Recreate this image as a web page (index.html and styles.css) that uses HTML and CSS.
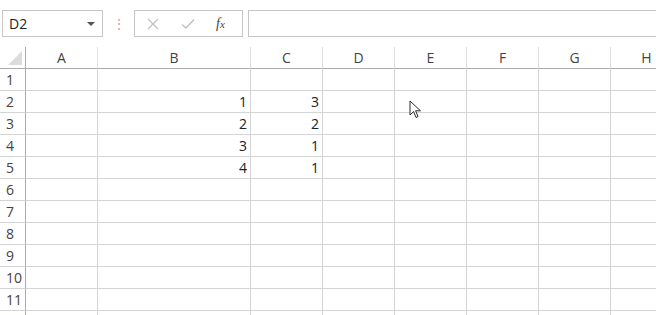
FILE: index.html
```html
<!DOCTYPE html>
<html lang="en">
<head>
    <meta charset="UTF-8">
    <title>Sheet</title>
    <link rel="stylesheet" href="styles.css">
</head>
<body>

<div class="toolbar">
    <div class="name-box">
        <span>D2</span>
        <span class="drop"></span>
    </div>
    <div class="grip">&#8942;</div>
    <div class="fx-buttons">
        <svg class="btn-x" width="12" height="12" viewBox="0 0 12 12">
            <path d="M1 1 L11 11 M11 1 L1 11" stroke="#c2c2c2" stroke-width="1.3" fill="none"/>
        </svg>
        <svg class="btn-ok" width="14" height="12" viewBox="0 0 14 12">
            <path d="M1 6.5 L5 10 L13 1.5" stroke="#c2c2c2" stroke-width="1.6" fill="none"/>
        </svg>
        <span class="fx"><i>f</i><i class="x">x</i></span>
    </div>
    <div class="formula"></div>
</div>

<div class="sheet">
    <div class="row head">
        <div class="cell corner"><span class="tri"></span></div>
        <div class="cell col-a">A</div>
        <div class="cell col-b">B</div>
        <div class="cell">C</div>
        <div class="cell">D</div>
        <div class="cell">E</div>
        <div class="cell">F</div>
        <div class="cell">G</div>
        <div class="cell">H</div>
    </div>
    <div id="rows"></div>
    <svg class="pointer" width="14" height="20" viewBox="0 0 14 20">
        <path d="M1 1 L1 15 L4.5 11.5 L7 17.5 L9 16.5 L6.6 10.8 L11.5 10.8 Z" fill="#fff" stroke="#2a2a2a" stroke-width="1" stroke-linejoin="round"/>
    </svg>
</div>

<script>
    const data = { 2: [1, 3], 3: [2, 2], 4: [3, 1], 5: [4, 1] };
    const rows = document.getElementById('rows');

    // row 12 only peeks in at the bottom edge, so it gets no number
    for (let r = 1; r <= 12; r++) {
        const vals = data[r] || ['', ''];
        let html = '<div class="cell num">' + (r < 12 ? r : '') + '</div>';
        html += '<div class="cell col-a"></div>';
        html += '<div class="cell col-b val">' + vals[0] + '</div>';
        html += '<div class="cell val">' + vals[1] + '</div>';
        for (let c = 0; c < 5; c++) html += '<div class="cell"></div>';
        const row = document.createElement('div');
        row.className = 'row';
        row.innerHTML = html;
        rows.appendChild(row);
    }
</script>

</body>
</html>
```

FILE: styles.css
```css
html, body {
    margin: 0;
    padding: 0;
    width: 100%;
    height: 100%;
    background-color: white;
    font-family: "Open Sans", "Noto Sans", sans-serif;
    color: #333;
    overflow: hidden;
}
.toolbar {
    display: flex;
    align-items: center;
    height: 47px;
    padding-left: 2px;
    box-sizing: border-box;
}
.name-box {
    width: 101px;
    height: 27px;
    border: 1px solid #c6c6c6;
    box-sizing: border-box;
    display: flex;
    align-items: center;
    justify-content: space-between;
    padding: 0 7px 0 6px;
    font-size: 14px;
    color: #222;
}
.drop {
    width: 0;
    height: 0;
    border-left: 4px solid transparent;
    border-right: 4px solid transparent;
    border-top: 4px solid #555;
}
.grip {
    width: 31px;
    text-align: center;
    color: #b0b0b0;
    font-size: 14px;
}
.fx-buttons {
    width: 109px;
    height: 27px;
    border: 1px solid #c6c6c6;
    box-sizing: border-box;
    display: flex;
    align-items: center;
    padding-left: 12px;
}
.btn-x {
    margin-right: 22px;
}
.btn-ok {
    margin-right: 21px;
}
.fx {
    font-family: "Liberation Serif", serif;
    font-size: 14px;
    color: #444;
}
.fx .x {
    font-size: 11px;
}
.formula {
    flex: 1;
    height: 27px;
    margin-left: 5px;
    border: 1px solid #c6c6c6;
    border-right: none;
    box-sizing: border-box;
}
.sheet {
    position: relative;
}
.row {
    display: flex;
    height: 22px;
}
.cell {
    flex: none;
    width: 72px;
    height: 22px;
    box-sizing: border-box;
    border-right: 1px solid #d4d4d4;
    border-bottom: 1px solid #d4d4d4;
    font-size: 14px;
    line-height: 21px;
    color: #222;
}
.cell.col-a {
    width: 72px;
}
.cell.col-b {
    width: 153px;
}
.head .cell {
    text-align: center;
    color: #444;
    border-right-color: #e0e0e0;
    border-bottom-color: #ababab;
}
.head .cell.corner {
    position: relative;
    width: 26px;
    border-right-color: #ababab;
}
.tri {
    position: absolute;
    right: 3px;
    bottom: 3px;
    width: 0;
    height: 0;
    border-left: 14px solid transparent;
    border-bottom: 14px solid #dcdcdc;
}
.cell.num {
    width: 26px;
    padding-left: 6px;
    color: #444;
    border-right-color: #ababab;
    border-bottom-color: #d4d4d4;
}
.cell.val {
    text-align: right;
    padding-right: 3px;
}
.pointer {
    position: absolute;
    left: 409px;
    top: 53px;
}
```
